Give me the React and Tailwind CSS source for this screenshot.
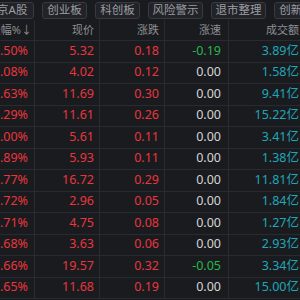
import React from "react";

const tabs = [
  ["北京A股", "w-[55px]"],
  ["创业板", "w-[45px]"],
  ["科创板", "w-[45px]"],
  ["风险警示", "w-[55px]"],
  ["退市整理", "w-[55px]"],
  ["创新层", "w-[45px]"],
];

const rows = [
  ["3.50%", "5.32", "0.18", "-0.19", "3.89亿"],
  ["3.08%", "4.02", "0.12", "0.00", "1.58亿"],
  ["2.63%", "11.69", "0.30", "0.00", "9.41亿"],
  ["2.29%", "11.61", "0.26", "0.00", "15.22亿"],
  ["2.00%", "5.61", "0.11", "0.00", "3.41亿"],
  ["1.89%", "5.93", "0.11", "0.00", "1.38亿"],
  ["1.77%", "16.72", "0.29", "0.00", "11.81亿"],
  ["1.72%", "2.96", "0.05", "0.00", "1.84亿"],
  ["1.71%", "4.75", "0.08", "0.00", "1.27亿"],
  ["1.68%", "3.63", "0.06", "0.00", "2.93亿"],
  ["1.66%", "19.57", "0.32", "-0.05", "3.34亿"],
  ["1.65%", "11.68", "0.19", "0.00", "15.00亿"],
];

const font = { fontFamily: '"Noto Sans", "Noto Sans CJK SC", sans-serif' };

export default function App() {
  return (
    <div className="w-[300px] h-[300px] overflow-hidden bg-[#1a1b1f]" style={font}>
      <div className="h-[20px] flex items-center gap-[8px] -ml-[21px] whitespace-nowrap">
        {tabs.map(([t, w]) => (
          <div
            key={t}
            className={w + " h-[17px] flex items-center justify-center rounded-[3px] border border-[#393a3f] bg-[#222328] text-[11.5px] leading-none text-[#9d9ea2] shrink-0"}
          >
            {t}
          </div>
        ))}
      </div>
      <div className="-ml-[30px] w-[333px]">
        <div className="h-[21px] flex border-b border-[#2a2b30] text-[11px] text-[#8e8f93]">
          <div className="w-[65px] flex items-center justify-end pr-[2px] border-r border-[#2a2b30]">涨幅%↓</div>
          <div className="w-[65px] flex items-center justify-end pr-[5px] border-r border-[#2a2b30]">现价</div>
          <div className="w-[65px] flex items-center justify-end pr-[5px] border-r border-[#2a2b30]">涨跌</div>
          <div className="w-[64px] flex items-center justify-end pr-[7px] border-r border-[#2a2b30]">涨速</div>
          <div className="w-[74px] flex items-center justify-end pr-[4px]">成交额</div>
        </div>
        {rows.map((r, i) => (
          <div key={i} className="h-[21.5px] flex border-b border-[#2a2b30] text-[12.5px]">
            <div className="w-[65px] flex items-center justify-end pr-[6px] border-r border-[#2a2b30] text-[#e8363d]">{r[0]}</div>
            <div className="w-[65px] flex items-center justify-end pr-[5px] border-r border-[#2a2b30] text-[#e8363d]">{r[1]}</div>
            <div className="w-[65px] flex items-center justify-end pr-[5px] border-r border-[#2a2b30] text-[#e8363d]">{r[2]}</div>
            <div className={"w-[64px] flex items-center justify-end pr-[7px] border-r border-[#2a2b30] " + (r[3].startsWith("-") ? "text-[#27b84a]" : "text-[#d4d4d6]")}>{r[3]}</div>
            <div className="w-[74px] flex items-center justify-end pr-[4px] text-[#1ea7b8]">{r[4]}</div>
          </div>
        ))}
      </div>
    </div>
  );
}
